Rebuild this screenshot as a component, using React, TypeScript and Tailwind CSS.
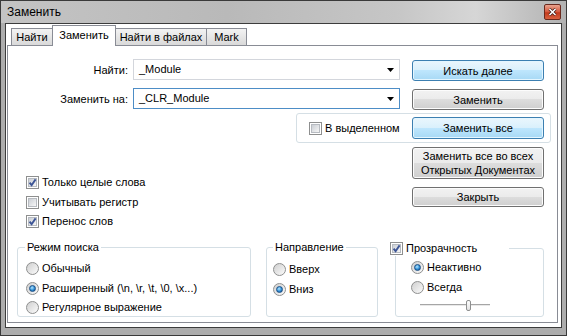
import React from 'react';

function CheckBox({ checked }: { checked?: boolean }) {
  return (
    <span className="relative flex h-[13px] w-[13px] flex-none items-center justify-center border border-[#8e8f8f] bg-white">
      <span className="h-[9px] w-[9px] border border-[#b7bbc1] bg-[linear-gradient(135deg,#cbcfd5,#f6f6f6)]" />
      {checked && (
        <svg className="absolute left-[1px] top-[1px]" width="9" height="9" viewBox="0 0 9 9">
          <path d="M1.6 4.6 L3.6 7.2 L7.6 1.4" stroke="#3d5596" strokeWidth="1.9" fill="none" />
        </svg>
      )}
    </span>
  );
}

function Radio({ checked }: { checked?: boolean }) {
  return (
    <span className="flex h-[13px] w-[13px] flex-none items-center justify-center rounded-full border border-[#8e8f8f] bg-[linear-gradient(135deg,#cfcfcf,#fbfbfb)]">
      {checked && (
        <span className="h-[7px] w-[7px] rounded-full border border-[#1b4f86] bg-[radial-gradient(circle_at_40%_35%,#b4e6ff,#2f8fd6_55%,#0c3f7c)]" />
      )}
    </span>
  );
}

function Btn({ children, primary, className }: { children: React.ReactNode; primary?: boolean; className: string }) {
  const look = primary
    ? 'border-[#3c7fb1] bg-[linear-gradient(#eaf6fd,#d9f0fc_50%,#bee6fd_50%,#a7d9f5)] shadow-[inset_0_0_0_1px_#e4f6ff]'
    : 'border-[#707070] bg-[linear-gradient(#f2f2f2,#ebebeb_50%,#dddddd_50%,#cfcfcf)] shadow-[inset_0_0_0_1px_#fcfcfc]';
  return (
    <button type="button" className={`flex w-[132px] items-center justify-center rounded-[3px] border text-center leading-[14px] text-black ${look} ${className}`}>
      {children}
    </button>
  );
}

function Combo({ value, focused }: { value: string; focused?: boolean }) {
  return (
    <div className={`flex h-[21px] w-[267px] items-center border bg-white pl-[5px] pr-[5px] ${focused ? 'border-[#4d8dc6]' : 'border-[#d3d6dc]'}`}>
      <span className="flex-1">{value}</span>
      <svg width="7" height="4" viewBox="0 0 7 4">
        <path d="M0 0h7L3.5 4z" fill="#000" />
      </svg>
    </div>
  );
}

function Option({ label, checked, radio }: { label: string; checked?: boolean; radio?: boolean }) {
  return (
    <div className="flex h-[16px] items-center gap-[3px] whitespace-nowrap">
      {radio ? <Radio checked={checked} /> : <CheckBox checked={checked} />}
      <span>{label}</span>
    </div>
  );
}

const tabIdle = 'h-[17px] whitespace-nowrap text-center border border-b-0 border-[#898c95] bg-[linear-gradient(#f3f3f3,#e6e6e6_50%,#d9d9d9)] mb-[1px] leading-[16px]';

export default function App() {
  return (
    <div className="flex h-[336px] w-[567px] flex-col border border-[#3a3a3a] bg-[#adadad] text-[11px] text-black [font-family:'Liberation_Sans',Arial,sans-serif]">
      <div className="flex h-[22px] flex-none items-center bg-[linear-gradient(90deg,#c4c4c4_0%,#b9b9b9_40%,#c6c6c6_70%,#d6d6d6_84%,#b2b2b2_100%)] pl-[6px] pr-[5px]">
        <span className="flex-1 text-[12px]">Заменить</span>
        <span className="flex h-[16px] w-[17px] items-center justify-center rounded-[2px] border border-[#6b2a1e] bg-[linear-gradient(#e9a48f,#d6573c_50%,#c23a1c_55%,#d9613f)]">
          <svg width="9" height="8" viewBox="0 0 9 8">
            <path d="M1.5 1 L7.5 7 M7.5 1 L1.5 7" stroke="#3a1a14" strokeWidth="3" />
            <path d="M1.5 1 L7.5 7 M7.5 1 L1.5 7" stroke="#fff" strokeWidth="1.6" />
          </svg>
        </span>
      </div>
      <div className="flex-1 px-[4px] pb-[7px]">
        <div className="h-full border border-[#3c3c3c] bg-white pt-[1px]">
          <div className="relative z-10 -mb-[1px] flex items-end pl-[5px]">
            <div className={`${tabIdle} w-[42px]`}>Найти</div>
            <div className="-mx-[1px] h-[21px] w-[64px] whitespace-nowrap border border-b-0 border-[#898c95] bg-white text-center leading-[18px]">Заменить</div>
            <div className={`${tabIdle} w-[92px]`}>Найти в файлах</div>
            <div className={`${tabIdle} -ml-[1px] w-[41px]`}>Mark</div>
          </div>
          <div className="ml-[1px] flex h-[278px] w-[551px] flex-col border border-[#898c95] bg-white">
            <div className="mt-[13px] flex h-[22px] items-start">
              <span className="mt-[3px] w-[120px] text-right">Найти:</span>
              <div className="ml-[5px]"><Combo value="_Module" /></div>
              <Btn primary className="ml-[12px] mt-[1px] h-[21px]">Искать далее</Btn>
            </div>
            <div className="mt-[7px] flex h-[22px] items-start">
              <span className="mt-[3px] w-[120px] text-right">Заменить на:</span>
              <div className="ml-[5px]"><Combo value="_CLR_Module" focused /></div>
              <Btn className="ml-[12px] mt-[1px] h-[21px]">Заменить</Btn>
            </div>
            <div className="ml-[288px] mt-[3px] flex h-[30px] w-[255px] items-center justify-between rounded-[3px] border border-[#d5dfe5] pl-[12px] pr-[6px]">
              <Option label="В выделенном" />
              <Btn primary className="h-[22px]">Заменить все</Btn>
            </div>
            <div className="mt-[4px] flex">
              <div className="w-[404px] pl-[18px] pt-[27px]">
                <Option label="Только целые слова" checked />
                <div className="mt-[4px]"><Option label="Учитывать регистр" /></div>
                <div className="mt-[3px]"><Option label="Перенос слов" checked /></div>
              </div>
              <div className="flex flex-col">
                <Btn className="h-[32px]">Заменить все во всех<br />Открытых Документах</Btn>
                <Btn className="mt-[8px] h-[20px]">Закрыть</Btn>
              </div>
            </div>
            <div className="mt-[11px] flex">
              <fieldset className="ml-[9px] h-[77px] w-[234px] rounded-[3px] border border-[#d5dfe5] pl-[8px]">
                <legend className="-ml-[1px] px-[2px] leading-[15px]">Режим поиска</legend>
                <div className="mt-[5px]"><Option radio label="Обычный" /></div>
                <div className="mt-[4px]"><Option radio checked label="Расширенный (\n, \r, \t, \0, \x...)" /></div>
                <div className="mt-[3px]"><Option radio label="Регулярное выражение" /></div>
              </fieldset>
              <fieldset className="ml-[15px] h-[77px] w-[112px] rounded-[3px] border border-[#d5dfe5] pl-[6px]">
                <legend className="px-[2px] leading-[15px]">Направление</legend>
                <div className="mt-[6px]"><Option radio label="Вверх" /></div>
                <div className="mt-[4px]"><Option radio checked label="Вниз" /></div>
              </fieldset>
              <fieldset className="ml-[17px] h-[77px] w-[149px] rounded-[3px] border border-[#d5dfe5] pl-[15px]">
                <legend className="-ml-[21px] w-[119px] leading-[15px]">
                  <Option label="Прозрачность" checked />
                </legend>
                <div className="mt-[3px]"><Option radio checked label="Неактивно" /></div>
                <div className="mt-[4px]"><Option radio label="Всегда" /></div>
                <div className="relative ml-[9px] mt-[5px] h-[11px] w-[70px]">
                  <div className="absolute left-0 right-0 top-[4px] h-[2px] border-t border-[#a6a6a6] bg-[#e9e9e9]" />
                  <div className="absolute left-[46px] top-0 h-[11px] w-[5px] rounded-[2px] border border-[#8e8f8f] bg-[linear-gradient(#fefefe,#e2e2e2)]" />
                </div>
              </fieldset>
            </div>
          </div>
        </div>
      </div>
    </div>
  );
}
